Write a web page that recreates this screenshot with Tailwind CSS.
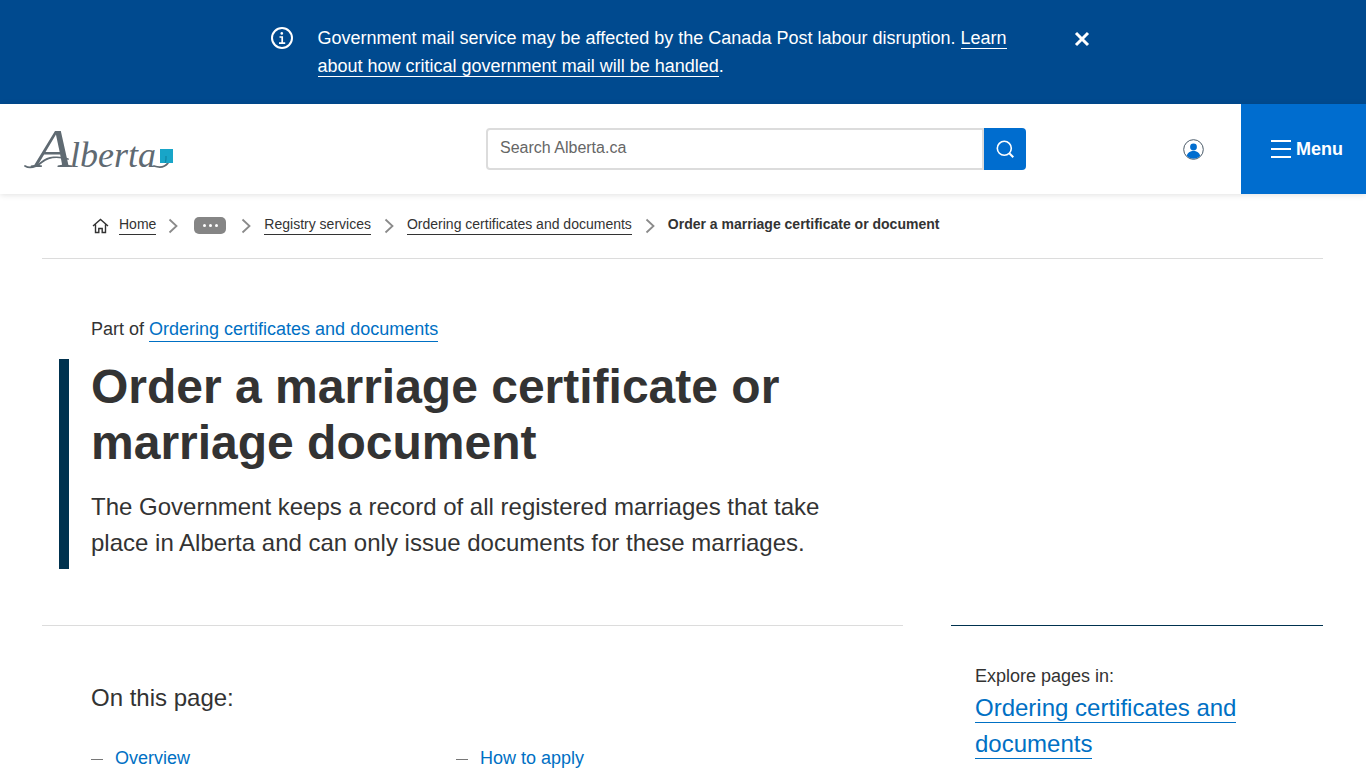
<!DOCTYPE html>
<html lang="en">
<head>
<meta charset="utf-8">
<title>Order a marriage certificate or marriage document</title>
<script src="https://cdn.jsdelivr.net/npm/@tailwindcss/browser@4"></script>
</head>
<body class="h-screen overflow-hidden bg-white font-['Liberation_Sans',Arial,sans-serif] text-[#333]">
<div class="flex h-[104px] bg-[#004a8f] text-white">
  <div class="ml-[271px] mt-[27px] w-[46.5px] shrink-0">
    <svg class="w-[22px] h-[22px]" viewBox="0 0 22 22" fill="none" stroke="white" stroke-width="2"><circle cx="11" cy="11" r="10"/><path d="M8.5 10h2.7v6M8 16.2h6.2" stroke-width="1.7"/><circle cx="10.8" cy="6.4" r="1.3" fill="white" stroke="none"/></svg>
  </div>
  <p class="mt-[24px] w-[700px] text-[18px] leading-[28px]">Government mail service may be affected by the Canada Post labour disruption. <a class="border-b border-white" href="#">Learn about how critical government mail will be handled</a>.</p>
  <div class="ml-[56.500px] mt-[31px]">
    <svg class="w-[16px] h-[16px]" viewBox="0 0 16 16" fill="none" stroke="white" stroke-width="3"><path d="M2 2l12 12M14 2L2 14"/></svg>
  </div>
</div>
<header class="relative z-10 flex h-[90px] items-center bg-white shadow-[0_1px_6px_rgba(0,0,0,0.12)]">
  <a class="ml-[24px] w-[150px] shrink-0" href="#" aria-label="Alberta">
    <svg class="block w-[150px] h-[50px] overflow-visible" viewBox="0 0 150 50" fill="none">
      <text x="10" y="43" font-family="'Liberation Serif',serif" font-style="italic" font-size="54" fill="#5f6a72" textLength="38" lengthAdjust="spacingAndGlyphs">A</text>
      <text x="46" y="43" font-family="'Liberation Serif',serif" font-style="italic" font-size="36" fill="#5f6a72" textLength="86" lengthAdjust="spacingAndGlyphs">lberta</text>
      <path d="M1 42c5 3 11 1 17-4s16-6 26-3M130 42c6 2 11 1 14-3" stroke="#5f6a72" stroke-width="1.8" stroke-linecap="round"/>
      <rect x="136" y="25" width="13" height="14" fill="#18a5c8"/>
      <path d="M141 39c1-2 1-4 1-7" stroke="#0f7f9c" stroke-width="1"/>
    </svg>
  </a>
  <div class="ml-[312px] flex h-[42px] w-[540px] shrink-0">
    <div class="flex flex-1 items-center rounded-l-[4px] border-2 border-[#dcdcdc] pb-[2px] pl-[12px] text-[16px] text-[#666]">Search Alberta.ca</div>
    <button class="flex w-[42px] items-center justify-center rounded-r-[4px] bg-[#006dcf]">
      <svg class="w-[20px] h-[20px]" viewBox="0 0 20 20" fill="none" stroke="white" stroke-width="1.6"><circle cx="9.3" cy="9.3" r="7"/><path d="M14.3 14.3l4 4" stroke-width="2"/></svg>
    </button>
  </div>
  <div class="ml-[157px] w-[58px] shrink-0">
    <svg class="block w-[21px] h-[21px]" viewBox="0 0 21 21" fill="none"><circle cx="10.5" cy="10.5" r="9.8" stroke="#4a5a68" stroke-width="1"/><circle cx="10.5" cy="8" r="3.4" fill="#006dcf"/><path d="M3.8 17c.6-3.5 3.4-5 6.700-5s6.100 1.500 6.700 5a9.500 9.500 0 0 1-13.400 0z" fill="#006dcf"/></svg>
  </div>
  <button class="flex h-full w-[125px] items-center bg-[#006dcf] pl-[30px] text-white">
    <svg class="w-[20px] h-[18px]" viewBox="0 0 20 18" stroke="white" stroke-width="1.800"><path d="M0 1h20M0 9h20M0 17h20"/></svg>
    <span class="ml-[5px] text-[18px] font-bold leading-none">Menu</span>
  </button>
</header>
<div class="ml-[42px] mr-[43px] h-[65px] border-b border-[#dcdcdc]">
  <nav class="flex h-[60px] items-center pl-[50px] text-[14px] text-[#333]">
    <svg class="w-[17px] h-[16px] mt-[3px]" viewBox="0 0 17 16" fill="none" stroke="#333" stroke-width="1.400"><path d="M1 8l7.500-6.500L16 8M3.500 6.500V14.500H6.800V10.500H10.200V14.500H13.500V6.500"/></svg>
    <a class="ml-[10px] border-b border-[#333] leading-[20px]" href="#">Home</a>
    <svg class="ml-[12px] mr-[16px] w-[10px] h-[16px] mt-[3px]" viewBox="0 0 10 16" fill="none" stroke="#8a8a8a" stroke-width="1.800"><path d="M1.500 1.500L8.500 8l-7 6.500"/></svg>
    <span class="mt-[3px] flex h-[17px] w-[32px] items-center justify-center gap-[3px] rounded-[5px] bg-[#858585]"><i class="size-[3px] rounded-full bg-white"></i><i class="size-[3px] rounded-full bg-white"></i><i class="size-[3px] rounded-full bg-white"></i></span>
    <svg class="mx-[15px] w-[10px] h-[16px] mt-[3px]" viewBox="0 0 10 16" fill="none" stroke="#8a8a8a" stroke-width="1.800"><path d="M1.500 1.500L8.500 8l-7 6.500"/></svg>
    <a class="-ml-[2px] border-b border-[#333] leading-[20px]" href="#">Registry services</a>
    <svg class="mx-[13px] w-[10px] h-[16px] mt-[3px]" viewBox="0 0 10 16" fill="none" stroke="#8a8a8a" stroke-width="1.800"><path d="M1.500 1.500L8.500 8l-7 6.500"/></svg>
    <a class="border-b border-[#333] leading-[20px]" href="#">Ordering certificates and documents</a>
    <svg class="mx-[13px] w-[10px] h-[16px] mt-[3px]" viewBox="0 0 10 16" fill="none" stroke="#8a8a8a" stroke-width="1.800"><path d="M1.500 1.500L8.500 8l-7 6.500"/></svg>
    <b class="font-bold">Order a marriage certificate or document</b>
  </nav>
</div>
<main class="ml-[59px]">
  <p class="ml-[32px] mt-[56px] text-[18px] leading-[28px]">Part of <a class="border-b border-[#0070c4] pb-[2px] text-[#0070c4]" href="#">Ordering certificates and documents</a></p>
  <section class="mt-[16px] h-[210px] w-[800px] border-l-[10px] border-[#00324f] pl-[22px]">
    <h1 class="text-[48px] font-bold leading-[56px]">Order a marriage certificate or marriage document</h1>
    <p class="mt-[18px] w-[760px] text-[24px] leading-[36px]">The Government keeps a record of all registered marriages that take place in Alberta and can only issue documents for these marriages.</p>
  </section>
</main>
<div class="mx-[42px] mt-[56px] flex gap-[48px]">
  <div class="w-[861px] border-t border-[#dcdcdc] pl-[49px] pt-[56px]">
    <h2 class="text-[24px] leading-[32px]">On this page:</h2>
    <ul class="mt-[30px] grid grid-cols-[365px_1fr] text-[18px] leading-[28px] text-[#0070c4]">
      <li class="flex"><span class="mr-[12px] mt-[15px] h-[1px] w-[12px] bg-[#777]"></span><a href="#">Overview</a></li>
      <li class="flex"><span class="mr-[12px] mt-[15px] h-[1px] w-[12px] bg-[#777]"></span><a href="#">How to apply</a></li>
    </ul>
  </div>
  <aside class="w-[372px] border-t border-[#00324f] pl-[24px] pt-[36px]">
    <p class="text-[18px] leading-[28px]">Explore pages in:</p>
    <p class="text-[24px] leading-[36px] text-[#0070c4]"><a class="border-b border-[#0070c4] pb-[1px]" href="#">Ordering certificates and documents</a></p>
  </aside>
</div>
</body>
</html>
